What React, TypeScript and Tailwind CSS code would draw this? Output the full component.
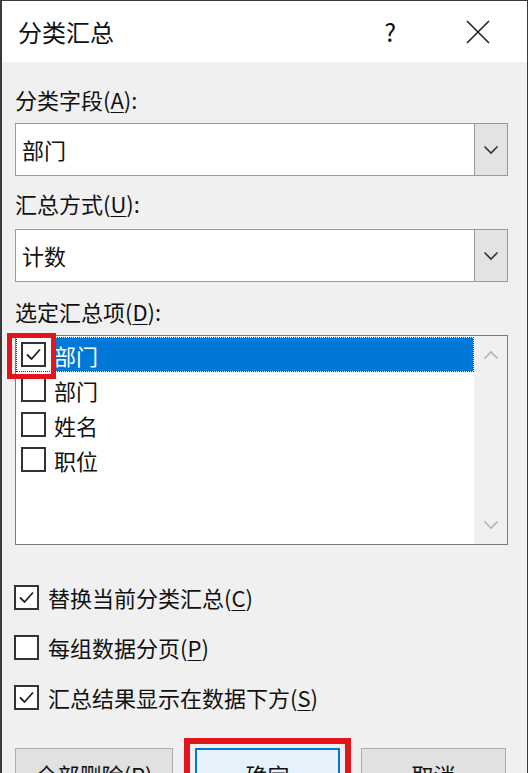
import React from 'react';

const font = { fontFamily: '"Noto Sans CJK SC", "Microsoft YaHei", sans-serif' };

function Key({ k }: { k: string }) {
  return <span className="underline underline-offset-[3px] decoration-1">{k}</span>;
}

function Check({ checked, className = '' }: { checked: boolean; className?: string }) {
  return (
    <span className={`flex h-[25px] w-[25px] shrink-0 items-center justify-center border-2 border-[#333333] bg-white ${className}`}>
      {checked && (
        <svg width="19" height="19" viewBox="0 0 19 19" fill="none">
          <path d="M3 9.5 L7.5 14 L16 4.5" stroke="#222222" strokeWidth="1.8" />
        </svg>
      )}
    </span>
  );
}

function Chevron({ color = '#333333', up = false }: { color?: string; up?: boolean }) {
  return (
    <svg width="16" height="10" viewBox="0 0 16 10" fill="none">
      <path d={up ? 'M1.5 8.5 L8 2 L14.5 8.5' : 'M1.5 1.5 L8 8 L14.5 1.5'} stroke={color} strokeWidth="1.6" />
    </svg>
  );
}

function Combo({ value }: { value: string }) {
  return (
    <div className="flex h-[53px] border border-[#9a9a9a] bg-white">
      <div className="flex flex-1 items-center pl-[6px] text-[22px]">{value}</div>
      <div className="flex w-[33px] items-center justify-center border-l border-[#9a9a9a] bg-[#e3e3e3]">
        <Chevron />
      </div>
    </div>
  );
}

const ITEMS = [
  { label: '部门', checked: true, selected: true },
  { label: '部门', checked: false, selected: false },
  { label: '姓名', checked: false, selected: false },
  { label: '职位', checked: false, selected: false },
];

const OPTIONS = [
  { label: '替换当前分类汇总', key: 'C', checked: true },
  { label: '每组数据分页', key: 'P', checked: false },
  { label: '汇总结果显示在数据下方', key: 'S', checked: true },
];

export default function App() {
  return (
    <div
      className="relative flex h-[773px] w-[528px] flex-col overflow-hidden border-l-2 border-r border-t border-[#3a3a3a] bg-[#f0f0f0] text-[#111111]"
      style={font}
    >
      {/* title bar */}
      <div className="flex h-[61px] shrink-0 items-center bg-white pl-[16px] pr-[37px]">
        <span className="flex-1 text-[24px] leading-none">分类汇总</span>
        <span className="mr-[70px] text-[25px] leading-none">?</span>
        <svg width="24" height="24" viewBox="0 0 24 24" fill="none">
          <path d="M1 1 L23 23 M23 1 L1 23" stroke="#222222" strokeWidth="1.6" />
        </svg>
      </div>

      <div className="flex flex-col pl-[13px] pr-[19px] pt-[22px] text-[22px]">
        <div className="h-[30px] leading-[30px]">
          分类字段(<Key k="A" />):
        </div>
        <div className="mt-[9px]">
          <Combo value="部门" />
        </div>

        <div className="mt-[12px] h-[30px] leading-[30px]">
          汇总方式(<Key k="U" />):
        </div>
        <div className="mt-[11px]">
          <Combo value="计数" />
        </div>

        <div className="mt-[14px] h-[30px] leading-[30px]">
          选定汇总项(<Key k="D" />):
        </div>

        {/* list box */}
        <div className="relative mt-[9px] flex h-[210px] border border-[#7a7a7a] bg-white">
          <div className="flex flex-1 flex-col pt-[1px]">
            {ITEMS.map((it, i) => (
              <div
                key={i}
                className={`flex h-[35px] items-center pl-[4px] ${it.selected ? 'border border-dotted border-[#333333]' : 'border border-transparent'}`}
              >
                <Check checked={it.checked} />
                <span
                  className={`ml-[7px] flex h-full flex-1 items-center pl-[1px] leading-none ${it.selected ? 'bg-[#0078d7] text-white' : ''}`}
                >
                  {it.label}
                </span>
              </div>
            ))}
          </div>
          <div className="flex w-[33px] flex-col items-center justify-between bg-[#f0f0f0] py-[14px]">
            <Chevron up color="#b4b4b4" />
            <Chevron color="#b4b4b4" />
          </div>
          {/* red highlight on first checkbox */}
          <div className="pointer-events-none absolute left-[-9px] top-[-3px] h-[46px] w-[49px] border-[5px] border-[#e3141c]" />
        </div>

        {/* options */}
        <div className="mt-[37px] flex flex-col gap-[20px]">
          {OPTIONS.map((o) => (
            <div key={o.key} className="flex h-[30px] items-center">
              <Check checked={o.checked} className="-ml-[1px]" />
              <span className="ml-[9px] leading-none">
                {o.label}(<Key k={o.key} />)
              </span>
            </div>
          ))}
        </div>

        {/* buttons */}
        <div className="mt-[36px] flex">
          <button className="flex h-[52px] w-[158px] items-start justify-center border border-[#adadad] bg-[#e1e1e1] pt-[14px] text-[22px] leading-none">
            全部删除(<Key k="R" />)
          </button>
          <div className="relative ml-[22px]">
            <button className="flex h-[52px] w-[145px] items-start justify-center border-2 border-[#0078d7] bg-[#e5f1fb] pt-[13px] text-[22px] leading-none">
              确定
            </button>
            <div className="pointer-events-none absolute left-[-11px] top-[-10px] h-[80px] w-[167px] border-[6px] border-[#e3141c]" />
          </div>
          <button className="ml-[21px] flex h-[52px] w-[145px] items-start justify-center border border-[#adadad] bg-[#e1e1e1] pt-[14px] text-[22px] leading-none">
            取消
          </button>
        </div>
      </div>
    </div>
  );
}
